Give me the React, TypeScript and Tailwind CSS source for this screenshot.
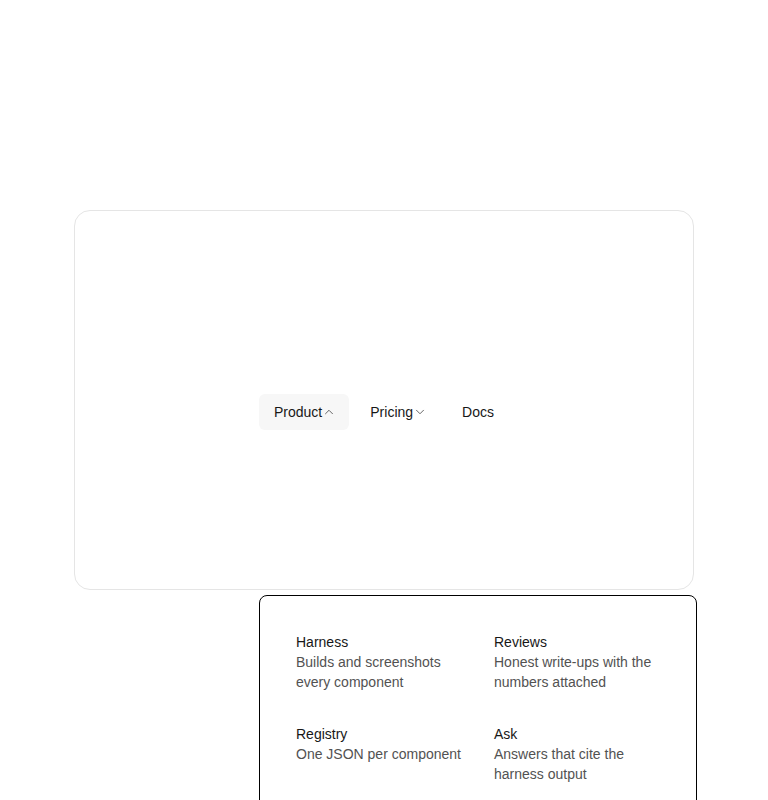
import React from "react";
import { ChevronDown, ChevronUp } from "lucide-react";

const items = [
  { title: "Harness", desc: "Builds and screenshots every component" },
  { title: "Reviews", desc: "Honest write-ups with the numbers attached" },
  { title: "Registry", desc: "One JSON per component" },
  { title: "Ask", desc: "Answers that cite the harness output" },
];

export default function App() {
  return (
    <div
      className="flex min-h-[800px] items-center justify-center bg-white"
      style={{ fontFamily: '"Liberation Sans", Arial, sans-serif' }}
    >
      <div className="relative flex h-[380px] w-[620px] items-center justify-center rounded-2xl border border-neutral-200">
        <nav className="ml-px mt-6 flex items-center gap-[6px]">
          <button className="flex h-9 items-center rounded-md bg-[#f7f7f7] pl-[15px] pr-[13px] text-sm text-neutral-900">
            Product
            <ChevronUp size={14} strokeWidth={1.5} className="text-neutral-600" />
          </button>
          <button className="flex h-9 items-center rounded-md pl-[15px] pr-[13px] text-sm text-neutral-900">
            Pricing
            <ChevronDown size={14} strokeWidth={1.5} className="text-neutral-600" />
          </button>
          <button className="flex h-9 items-center rounded-md px-4 text-sm text-neutral-900">
            Docs
          </button>
        </nav>

        <div className="absolute left-[184px] top-[calc(100%+6px)] w-[438px] rounded-lg border border-black bg-white p-6">
          <ul className="grid grid-cols-2 gap-2">
            {items.map((it) => (
              <li key={it.title} className="rounded-md p-3">
                <div className="text-sm leading-5 text-neutral-900">{it.title}</div>
                <p className="text-sm leading-5 text-neutral-600">{it.desc}</p>
              </li>
            ))}
          </ul>
        </div>
      </div>
    </div>
  );
}
